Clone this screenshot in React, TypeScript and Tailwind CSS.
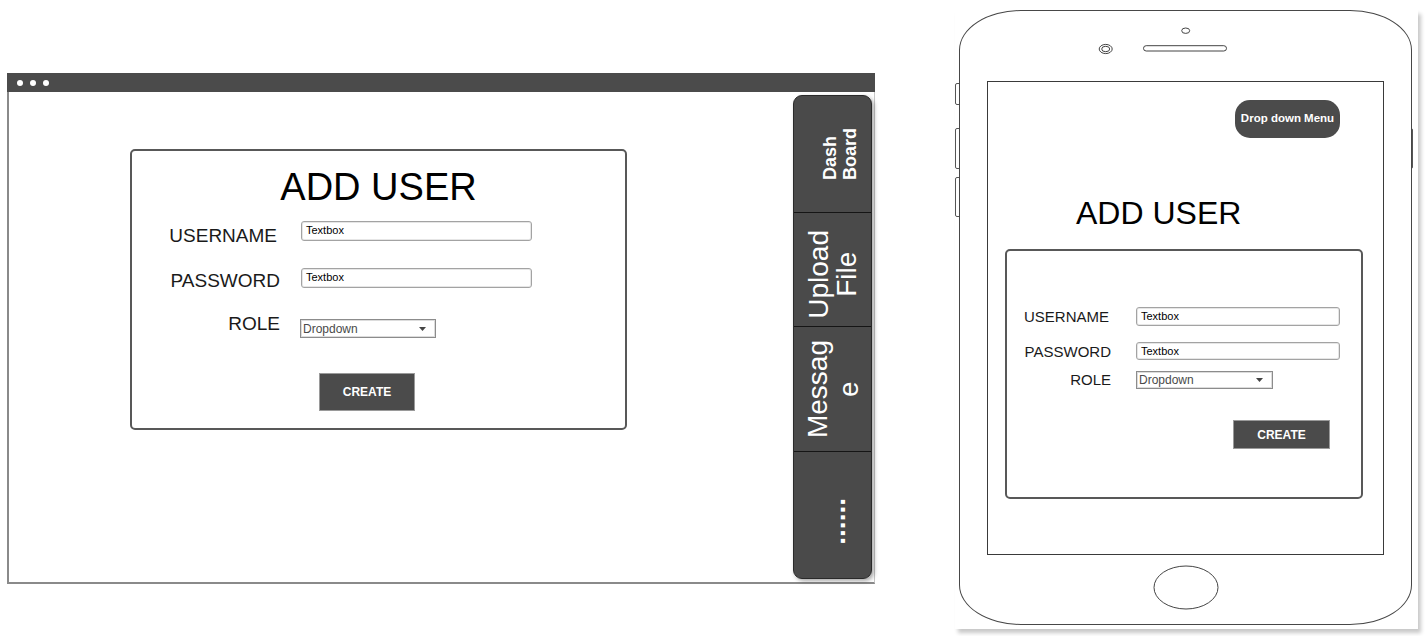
import React from "react";

function TextBox({ w, h }: { w: string; h: string }) {
  return (
    <div
      className={`${w} ${h} border border-[#a3a3a3] rounded-[3px] shadow-[inset_0_0_0_1px_#e6e6e6] bg-white text-[11px] leading-[13px] text-black pl-[4px] pt-[2px]`}
    >
      Textbox
    </div>
  );
}

function Dropdown({ w, h }: { w: string; h: string }) {
  return (
    <div
      className={`${w} ${h} border border-[#8c8c8c] shadow-[inset_0_0_0_1px_#dcdcdc] bg-white flex items-center justify-between pl-[2px] pr-[9px]`}
    >
      <span className="text-[12px] leading-[14px] text-[#4a4a4a]">Dropdown</span>
      <svg width="7" height="4" viewBox="0 0 7 4">
        <path d="M0 0 L7 0 L3.5 4 Z" fill="#444" />
      </svg>
    </div>
  );
}

function Browser() {
  return (
    <div className="relative ml-[7px] mt-[73px] w-[868px] h-[511px] flex flex-col shrink-0">
      <div className="h-[19px] bg-[#4b4b4b] flex items-center gap-[7px] pl-[10px]">
        <div className="w-[6px] h-[6px] rounded-full bg-white" />
        <div className="w-[6px] h-[6px] rounded-full bg-white" />
        <div className="w-[6px] h-[6px] rounded-full bg-white" />
      </div>
      <div className="flex-1 border-l-2 border-b-2 border-r border-l-[#8a8a8a] border-b-[#8a8a8a] border-r-[#c8c8c8] bg-white">
        <div className="ml-[121px] mt-[57px] w-[497px] h-[281px] border-2 border-[#585858] rounded-[5px] flex flex-col">
          <div className="mt-[17px] text-[38px] leading-[38px] text-center text-black">ADD USER</div>
          <div className="mt-[15px] flex items-start">
            <div className="w-[148px] text-right text-[19px] leading-[19px] mt-[5px] text-[#1a1a1a] pr-[3px]">USERNAME</div>
            <div className="ml-[21px]">
              <TextBox w="w-[231px]" h="h-[20px]" />
            </div>
          </div>
          <div className="mt-[23px] flex items-start">
            <div className="w-[148px] text-right text-[19px] leading-[19px] mt-[3px] text-[#1a1a1a]">PASSWORD</div>
            <div className="ml-[21px]">
              <TextBox w="w-[231px]" h="h-[20px]" />
            </div>
          </div>
          <div className="mt-[24px] flex items-start">
            <div className="w-[148px] text-right text-[19px] leading-[19px] text-[#1a1a1a]">ROLE</div>
            <div className="ml-[20px] mt-[5px]">
              <Dropdown w="w-[136px]" h="h-[19px]" />
            </div>
          </div>
          <button className="mt-[35px] ml-[187px] w-[96px] h-[38px] bg-[#4b4b4b] text-white font-bold text-[12px] border border-[#9a9a9a]">
            CREATE
          </button>
        </div>
      </div>

      {/* side navigation overlay */}
      <div className="absolute left-[786px] top-[22px] w-[79px] h-[484px] bg-[#4a4a4a] rounded-[9px] border border-[#2a2a2a] shadow-[2px_2px_4px_rgba(0,0,0,0.35)] flex flex-col overflow-hidden text-white">
        <div className="h-[117px] border-b border-[#151515] flex items-center justify-center pl-[14px]">
          <div className="[writing-mode:vertical-rl] rotate-180 text-start text-[18px] font-bold leading-[20px]">
            Dash
            <br />
            Board
          </div>
        </div>
        <div className="h-[114px] border-b border-[#151515] flex items-center justify-center pt-[9px]">
          <div className="[writing-mode:vertical-rl] rotate-180 text-center text-[28px] leading-[28px]">
            Upload
            <br />
            File
          </div>
        </div>
        <div className="h-[125px] border-b border-[#151515] flex items-center justify-center">
          <div className="[writing-mode:vertical-rl] rotate-180 text-center text-[28px] leading-[31px]">
            Messag
            <br />e
          </div>
        </div>
        <div className="flex-1 flex items-center justify-center pl-[6px] pt-[12px]">
          <div className="[writing-mode:vertical-rl] rotate-180 text-[28px] font-bold leading-[28px]">......</div>
        </div>
      </div>
    </div>
  );
}

function Phone() {
  return (
    <div className="relative ml-[80px] mt-[10px] w-[463px] h-[619px] bg-white shadow-[3px_4px_4px_rgba(0,0,0,0.22)] shrink-0">
      {/* side buttons */}
      <div className="absolute left-0 top-[73px] w-[5px] h-[22px] border border-[#555] rounded-l-[2px] bg-white" />
      <div className="absolute left-0 top-[118px] w-[5px] h-[41px] border border-[#555] rounded-l-[2px] bg-white" />
      <div className="absolute left-0 top-[167px] w-[5px] h-[40px] border border-[#555] rounded-l-[2px] bg-white" />
      <div className="absolute left-[453px] top-[118px] w-[5px] h-[41px] border border-[#555] rounded-r-[2px] bg-white" />

      <div className="relative ml-[4px] w-[453px] h-[615px] border border-[#474747] rounded-[62px/40px] bg-white flex flex-col">
        <svg width="451" height="70" viewBox="0 0 451 70" className="shrink-0">
          <ellipse cx="225.7" cy="19.7" rx="4" ry="2.7" fill="none" stroke="#444" strokeWidth="1" />
          <ellipse cx="145.7" cy="38" rx="6.5" ry="4.6" fill="none" stroke="#444" strokeWidth="1" />
          <ellipse cx="145.7" cy="38" rx="4" ry="2.7" fill="none" stroke="#444" strokeWidth="1" />
          <rect x="183.5" y="34.7" width="83" height="5.3" rx="2.7" fill="none" stroke="#444" strokeWidth="1" />
        </svg>

        <div className="ml-[27px] w-[397px] h-[474px] border border-[#3a3a3a] flex flex-col shrink-0">
          <div className="mt-[18px] flex justify-end pr-[43px]">
            <div className="w-[105px] h-[38px] rounded-[15px] bg-[#4b4b4b] text-white font-bold text-[11.5px] flex items-center justify-center">
              Drop down Menu
            </div>
          </div>
          <div className="mt-[59px] ml-[88px] text-[32px] leading-[32px] text-black">ADD USER</div>
          <div className="mt-[20px] ml-[17px] w-[358px] h-[250px] border-2 border-[#585858] rounded-[5px] flex flex-col">
            <div className="mt-[56px] flex items-center">
              <div className="w-[104px] text-right text-[15px] leading-[17px] text-[#1a1a1a] pr-[2px]">USERNAME</div>
              <div className="ml-[25px]">
                <TextBox w="w-[204px]" h="h-[19px]" />
              </div>
            </div>
            <div className="mt-[16px] flex items-center">
              <div className="w-[104px] text-right text-[15px] leading-[17px] text-[#1a1a1a] mt-[1px]">PASSWORD</div>
              <div className="ml-[25px]">
                <TextBox w="w-[204px]" h="h-[18px]" />
              </div>
            </div>
            <div className="mt-[11px] flex items-center">
              <div className="w-[104px] text-right text-[15px] leading-[17px] text-[#1a1a1a] -mt-[2px]">ROLE</div>
              <div className="ml-[25px]">
                <Dropdown w="w-[137px]" h="h-[18px]" />
              </div>
            </div>
            <div className="mt-[31px] flex justify-end pr-[31px]">
              <button className="w-[97px] h-[29px] bg-[#4b4b4b] text-white font-bold text-[12px] border border-[#9a9a9a]">
                CREATE
              </button>
            </div>
          </div>
        </div>

        <svg width="451" height="69" viewBox="0 0 451 69" className="shrink-0">
          <ellipse cx="226" cy="32.5" rx="32" ry="21.5" fill="none" stroke="#444" strokeWidth="1" />
        </svg>
      </div>
    </div>
  );
}

export default function App() {
  return (
    <div className="w-[1425px] h-[636px] bg-white flex items-start overflow-hidden font-['Liberation_Sans',Arial,sans-serif]">
      <Browser />
      <Phone />
    </div>
  );
}
